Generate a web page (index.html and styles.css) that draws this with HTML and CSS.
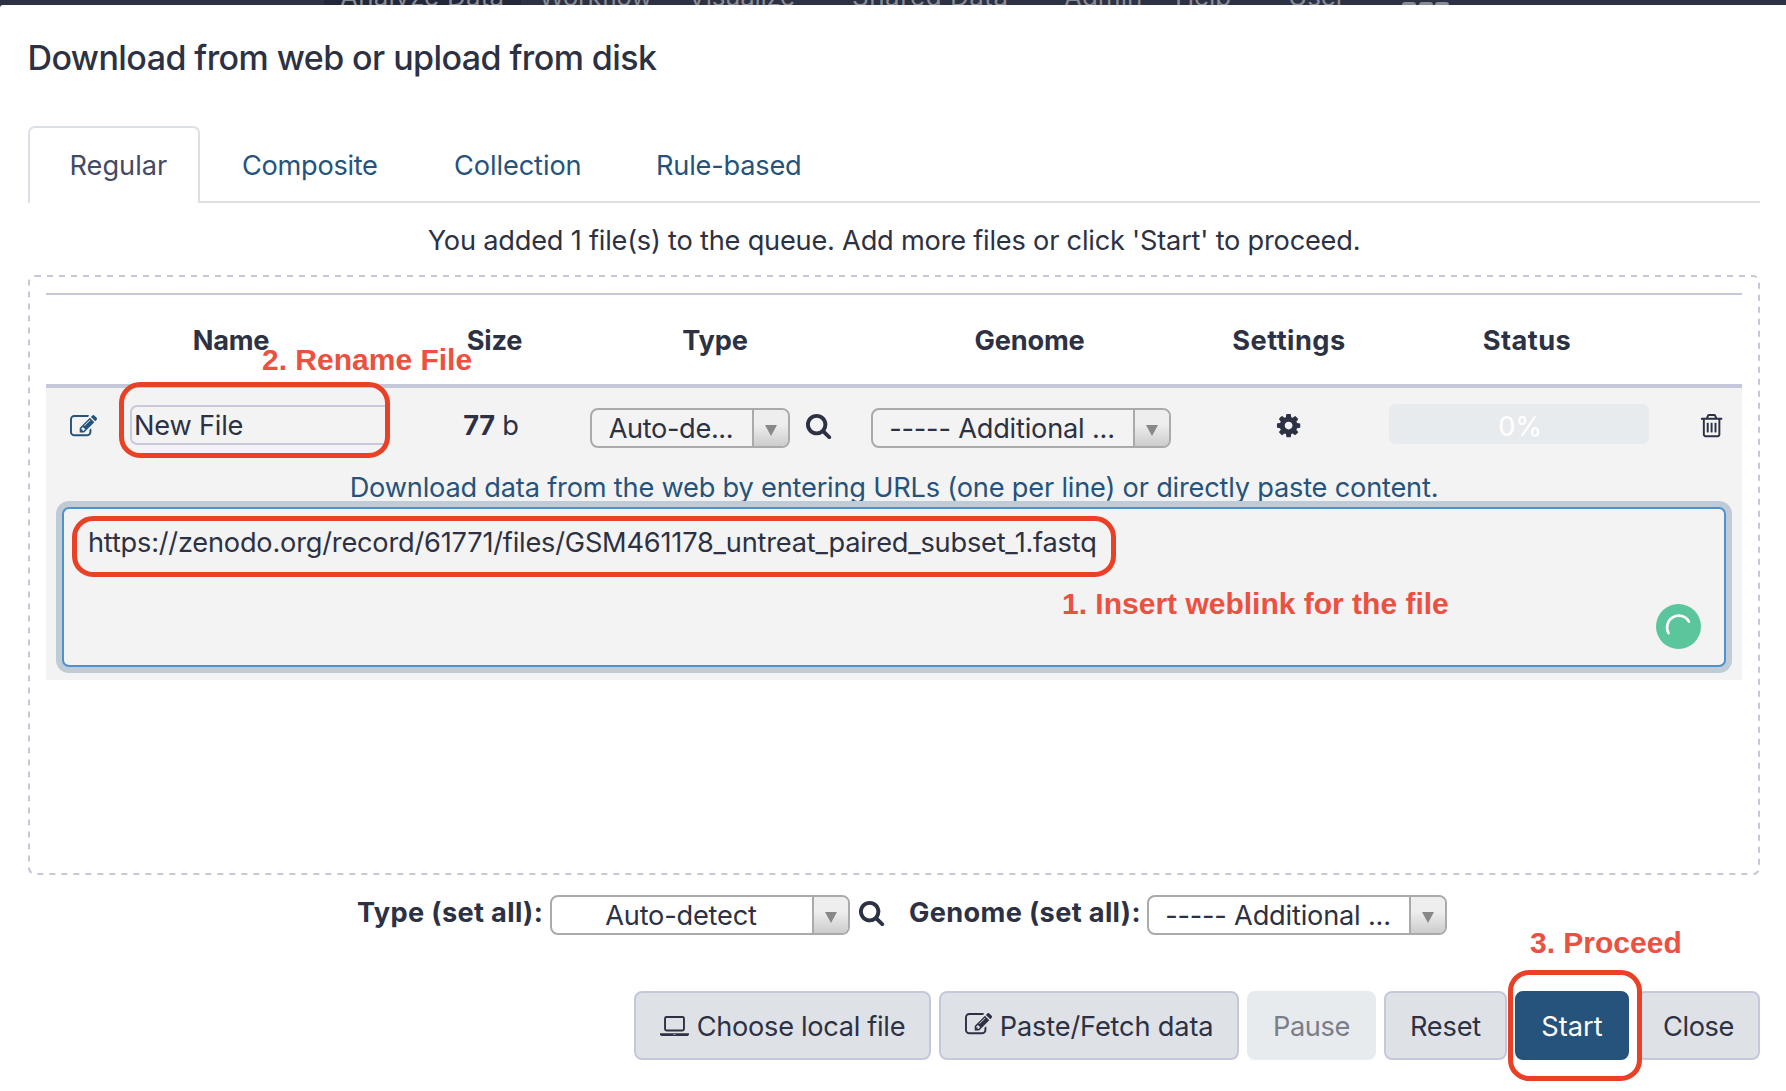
FILE: index.html
```html
<!DOCTYPE html>
<html lang="en">
<head>
<meta charset="utf-8">
<title>Download from web or upload from disk</title>
<link rel="stylesheet" href="styles.css">
</head>
<body>
<svg class="defs" aria-hidden="true">
  <symbol id="edit" viewBox="0 0 1792 1792"><path d="M888 1184l116-116-152-152-116 116v56h96v96h56zm440-720q-16-16-33 1l-350 350q-17 17-1 33t33-1l350-350q17-17 1-33zm80 594v190q0 119-84.5 203.5t-203.5 84.5h-832q-119 0-203.5-84.5t-84.5-203.5v-832q0-119 84.5-203.5t203.5-84.5h832q63 0 117 25 15 7 18 23 3 17-9 29l-49 49q-14 14-32 8-23-6-45-6h-832q-66 0-113 47t-47 113v832q0 66 47 113t113 47h832q66 0 113-47t47-113v-126q0-13 9-22l64-64q15-15 35-7t20 29zm-96-738l288 288-672 672h-288v-288zm444 132l-92 92-288-288 92-92q28-28 68-28t68 28l152 152q28 28 28 68t-28 68z"/></symbol>
  <symbol id="search" viewBox="0 0 1792 1792"><path d="M1216 832q0-185-131.5-316.5t-316.5-131.5-316.5 131.5-131.5 316.5 131.5 316.5 316.5 131.5 316.5-131.5 131.5-316.5zm512 832q0 52-38 90t-90 38q-54 0-90-38l-343-342q-179 124-399 124-143 0-273.5-55.5t-225-150-150-225-55.5-273.5 55.5-273.5 150-225 225-150 273.5-55.5 273.5 55.5 225 150 150 225 55.5 273.5q0 220-124 399l343 343q37 37 37 90z"/></symbol>
  <symbol id="cog" viewBox="0 0 1792 1792"><path d="M1152 896q0-106-75-181t-181-75-181 75-75 181 75 181 181 75 181-75 75-181zm512-109v222q0 12-8 23t-20 13l-185 28q-19 54-39 91 35 50 107 138 10 12 10 25t-9 23q-27 37-99 108t-94 71q-12 0-26-9l-138-108q-44 23-91 38-16 136-29 186-7 28-36 28h-222q-14 0-24.5-8.5t-11.5-21.5l-28-184q-49-16-90-37l-141 107q-10 9-25 9-14 0-25-11-126-114-165-168-7-10-7-23 0-12 8-23 15-21 51-66.5t54-70.5q-27-50-41-99l-183-27q-13-2-21-12.5t-8-23.5v-222q0-12 8-23t19-13l186-28q14-46 39-92-40-57-107-138-10-12-10-24 0-10 9-23 26-36 98.5-107.5t94.5-71.5q13 0 26 10l138 107q44-23 91-38 16-136 29-186 7-28 36-28h222q14 0 24.5 8.5t11.5 21.5l28 184q49 16 90 37l142-107q9-9 24-9 13 0 25 10 129 119 165 170 7 8 7 22 0 12-8 23-15 21-51 66.5t-54 70.5q26 50 41 98l183 28q13 2 21 12.5t8 23.5z"/></symbol>
  <symbol id="trash" viewBox="0 0 1792 1792"><path d="M704 736v576q0 14-9 23t-23 9h-64q-14 0-23-9t-9-23v-576q0-14 9-23t23-9h64q14 0 23 9t9 23zm256 0v576q0 14-9 23t-23 9h-64q-14 0-23-9t-9-23v-576q0-14 9-23t23-9h64q14 0 23 9t9 23zm256 0v576q0 14-9 23t-23 9h-64q-14 0-23-9t-9-23v-576q0-14 9-23t23-9h64q14 0 23 9t9 23zm128 724v-948h-896v948q0 22 7 40.5t14.5 27 10.5 8.5h832q3 0 10.5-8.5t14.5-27 7-40.5zm-672-1076h448l-48-117q-7-9-17-11h-317q-10 2-17 11zm928 32v64q0 14-9 23t-23 9h-96v948q0 83-47 143.5t-113 60.5h-832q-66 0-113-58.5t-47-141.5v-952h-96q-14 0-23-9t-9-23v-64q0-14 9-23t23-9h309l70-167q15-37 54-63t79-26h320q40 0 79 26t54 63l70 167h309q14 0 23 9t9 23z"/></symbol>
  <symbol id="laptop" viewBox="0 0 29 22"><path fill-rule="evenodd" d="M6.500 1h16a2.400 2.400 0 0 1 2.400 2.400v10.600a2.400 2.400 0 0 1-2.400 2.400h-16a2.400 2.400 0 0 1-2.400-2.400v-10.600a2.400 2.400 0 0 1 2.400-2.400zm0 1.900a.5.5 0 0 0-.5.5v10.600a.5.5 0 0 0 .5.5h16a.5.5 0 0 0 .5-.5v-10.600a.5.5 0 0 0-.5-.5zM0 18.200h29v1.300c0 .9-1.100 1.500-2.400 1.500h-24.200c-1.300 0-2.400-.6-2.400-1.500zm13.200.7v.6h2.600v-.6z"/></symbol>
  <symbol id="arrow" viewBox="0 0 12 11"><path d="M0 0h12l-6 11z"/></symbol>
</svg>

<nav class="masthead">
  <span class="nav-item nav-analyze">Analyze Data</span>
  <span class="nav-item nav-workflow">Workflow</span>
  <span class="nav-item nav-visualize">Visualize</span>
  <span class="nav-item nav-shared">Shared Data</span>
  <span class="nav-item nav-admin">Admin</span>
  <span class="nav-item nav-help">Help</span>
  <span class="nav-item nav-user">User</span>
  <span class="nav-grid"><i></i><i></i><i></i></span>
</nav>

<main class="modal">
  <h1 class="title">Download from web or upload from disk</h1>

  <div class="tabs">
    <a class="tab active">Regular</a>
    <a class="tab tab-composite">Composite</a>
    <a class="tab tab-collection">Collection</a>
    <a class="tab tab-rule">Rule-based</a>
  </div>

  <p class="info">You added 1 file(s) to the queue. Add more files or click 'Start' to proceed.</p>

  <section class="queue">
    <svg class="dashes"><rect x="1" y="1" width="1730" height="598" rx="6"/></svg>
    <div class="thead">
      <span></span><span>Name</span><span>Size</span><span>Type</span><span>Genome</span><span class="wide">Settings</span><span class="wide">Status</span><span></span>
    </div>
    <div class="item">
      <div class="row">
        <svg class="icon row-edit"><use href="#edit"/></svg>
        <input class="name" value="New File" spellcheck="false">
        <div class="size"><b>77</b> b</div>
        <div class="type">
          <div class="select short"><span>Auto-de...</span><i><svg><use href="#arrow"/></svg></i></div>
          <svg class="icon"><use href="#search"/></svg>
        </div>
        <div class="select genome"><span>----- Additional ...</span><i><svg><use href="#arrow"/></svg></i></div>
        <svg class="icon row-cog"><use href="#cog"/></svg>
        <div class="progress">0%</div>
        <svg class="icon row-trash"><use href="#trash"/></svg>
      </div>
      <p class="hint">Download data from the web by entering URLs (one per line) or directly paste content.</p>
      <div class="paste">
        <textarea class="url" spellcheck="false">https://zenodo.org/record/61771/files/GSM461178_untreat_paired_subset_1.fastq</textarea>
        <svg class="spinner" viewBox="0 0 45 45"><circle cx="22.500" cy="22.500" r="22.500" fill="#5bc59b"/><path d="M12.600 29.200A11.200 11.200 0 0 1 33 17.600" fill="none" stroke="#fff" stroke-width="2.600" stroke-linecap="round"/></svg>
      </div>
    </div>
  </section>

  <div class="set-all">
    <label class="label-type">Type (set all):</label>
    <div class="select"><span>Auto-detect</span><i><svg><use href="#arrow"/></svg></i></div>
    <svg class="icon"><use href="#search"/></svg>
    <label class="label-genome">Genome (set all):</label>
    <div class="select"><span>----- Additional ...</span><i><svg><use href="#arrow"/></svg></i></div>
  </div>

  <div class="buttons">
    <button class="btn choose"><svg class="laptop"><use href="#laptop"/></svg>Choose local file</button>
    <button class="btn fetch"><svg class="icon"><use href="#edit"/></svg>Paste/Fetch data</button>
    <button class="btn pause">Pause</button>
    <button class="btn reset">Reset</button>
    <button class="btn start">Start</button>
    <button class="btn close">Close</button>
  </div>
</main>

<div class="frame frame-name"></div>
<div class="frame frame-url"></div>
<div class="frame frame-start"></div>
<div class="note note-rename">2. Rename File</div>
<div class="note note-insert">1. Insert weblink for the file</div>
<div class="note note-proceed">3. Proceed</div>
</body>
</html>
```
FILE: styles.css
```css
* { box-sizing: border-box; }

body {
  position: relative;
  width: 1786px;
  height: 1091px;
  margin: 0;
  overflow: hidden;
  background: #2c3143;
  color: #2c3143;
  font: 400 27.2px/40px Inter, "Liberation Sans", sans-serif;
  letter-spacing: -0.2px;
}

.defs { position: absolute; width: 0; height: 0; }
.icon { flex: none; width: 27.2px; height: 27.2px; fill: currentColor; }

/* masthead, mostly hidden behind the dialog */
.masthead {
  display: flex;
  align-items: flex-end;
  height: 5px;
  padding-left: 324px;
  overflow: hidden;
  color: #898b95;
  font-size: 26px;
}
.nav-item { flex: none; height: 34px; line-height: 41px; margin-bottom: -5px; white-space: nowrap; }
.nav-analyze { width: 197px; padding-left: 16px; background: #23273a; letter-spacing: 0.2px; }
.nav-workflow { width: 167px; padding-left: 18px; letter-spacing: -0.5px; }
.nav-visualize { width: 164px; letter-spacing: -0.3px; }
.nav-shared { width: 212px; letter-spacing: 0.5px; }
.nav-admin { width: 111px; letter-spacing: 0; }
.nav-help { width: 113px; }
.nav-user { width: 114px; }
.nav-grid { display: flex; gap: 2.500px; height: 3px; }
.nav-grid i { width: 14px; height: 8px; border-radius: 3px; background: #898b95; }

.modal {
  display: flex;
  flex-direction: column;
  height: 1086px;
  padding: 0 26px 0 28px;
  border-top-left-radius: 3px;
  background: #fff;
}

.title {
  margin: 28px 0 0 -0.500px;
  font-size: 34px;
  font-weight: 500;
  line-height: 50px;
  letter-spacing: -0.57px;
}

.tabs {
  display: flex;
  height: 77px;
  margin-top: 43px;
  border-bottom: 2px solid #dce0e6;
  color: #25537b;
  line-height: 76px;
}
.tab { height: 77px; padding-top: 2px; }
.tab.active {
  width: 172px;
  padding: 0 0 0 39.500px;
  border: 2px solid #dce0e6;
  border-bottom: 0;
  border-radius: 7px 7px 0 0;
  background: #fff;
  color: #434a63;
  letter-spacing: 0;
}
.tab-composite { padding-left: 42px; width: 254px; letter-spacing: -0.3px; }
.tab-collection { width: 202px; letter-spacing: -0.1px; }
.tab-rule { letter-spacing: -0.2px; }

.info { margin: 18px 0 0; height: 40px; text-align: center; letter-spacing: -0.215px; }

.queue {
  position: relative;
  height: 600px;
  margin-top: 14px;
  padding: 18px;
}
.dashes { position: absolute; inset: 0; width: 100%; height: 100%; }
.dashes rect { fill: none; stroke: #c5c8da; stroke-width: 2; stroke-dasharray: 6 6; }
.thead {
  display: grid;
  grid-template-columns: 28px 314px 213px 228px 401px 118px 358px 36px;
  height: 95px;
  border-top: 2px solid #c5c8da;
  border-bottom: 4px solid #c5c8da;
  font-weight: 700;
  line-height: 91px;
  text-align: center;
}
.thead .wide { letter-spacing: 0.45px; }

.item { height: 292px; background: #f3f3f3; }
.row {
  display: grid;
  grid-template-columns: 84px 258px 202px 281px 300px 218px 260px 93px;
  align-items: start;
  height: 93px;
}
.row-edit { margin: 24.500px 0 0 24px; color: #25537b; }
.name {
  height: 40px;
  margin-top: 17px;
  padding: 2px 0 0 2px;
  border: 2px solid #c8cadc;
  border-right: 0;
  border-radius: 7px 0 0 7px;
  outline: 0;
  background: transparent;
  color: inherit;
  font: inherit;
  letter-spacing: inherit;
}
.size { margin-top: 18px; padding-left: 4px; text-align: center; }
.type { display: flex; gap: 15px; padding-top: 20px; }
.type .icon { margin-top: 3.500px; }
.genome { margin-top: 20px; }
.row-cog { margin: 23.600px 0 0 103.500px; }
.progress {
  height: 40px;
  margin-top: 16px;
  padding-left: 2px;
  border-radius: 7px;
  background: #e8ebee;
  color: #fff;
  line-height: 46px;
  text-align: center;
}
.row-trash { margin: 23.600px 0 0 48.500px; }

.select {
  display: flex;
  flex: none;
  width: 300px;
  height: 40px;
  overflow: hidden;
  border: 2px solid #aaa;
  border-radius: 8px;
}
.select.short { width: 200px; letter-spacing: -0.37px; }
.select span { flex: 1; line-height: 38px; padding-right: 2px; text-align: center; white-space: nowrap; }
.select i {
  display: flex;
  width: 36px;
  align-items: center;
  justify-content: center;
  border-left: 2px solid #aaa;
  background: linear-gradient(#eee 40%, #ccc);
}
.select i svg { width: 12px; height: 11px; margin-top: 4px; fill: #888; }

.hint { height: 26px; margin: 0; color: #25537b; line-height: 14px; text-align: center; }
.paste { position: relative; padding: 0 16px; }
.url {
  display: block;
  width: 100%;
  height: 160px;
  padding: 14px 24px;
  resize: none;
  border: 2px solid #4d92cd;
  border-radius: 7px;
  outline: 0;
  background: #f3f3f3;
  box-shadow: 0 0 0 6px #bfcbd6;
  color: inherit;
  font: inherit;
  letter-spacing: -0.21px;
}
.spinner { position: absolute; right: 41px; bottom: 18px; width: 45px; height: 45px; }

.set-all { display: flex; height: 40px; margin: 20px 0 0 329px; }
.set-all label { font-weight: 700; line-height: 35px; letter-spacing: 0.34px; white-space: nowrap; }
.label-type { width: 193px; }
.set-all .icon { margin: 4px 0 0 7.600px; }
.label-genome { width: 238px; margin-left: 24.200px; }

.buttons { display: flex; justify-content: flex-end; gap: 8px; height: 69px; margin-top: 56px; }
.btn {
  display: flex;
  align-items: center;
  justify-content: center;
  padding: 2px 0 0;
  border: 2px solid #c5c8da;
  border-radius: 8px;
  background: #dee1e6;
  color: inherit;
  font: inherit;
  letter-spacing: -0.2px;
  white-space: nowrap;
}
.btn .icon, .btn .laptop { margin-right: 8px; }
.btn .icon { margin-top: -3px; }
.laptop { width: 29px; height: 22px; margin-top: -2px; fill: currentColor; }
.choose { width: 297px; letter-spacing: -0.31px; }
.fetch { width: 300px; letter-spacing: -0.15px; }
.pause { width: 129px; border-color: #e8ebee; background: #e8ebee; color: #7b7e8a; letter-spacing: -0.4px; }
.reset { width: 123px; }
.start { width: 114px; border-color: #25537b; background: #25537b; color: #fff; letter-spacing: 0; }
.close { width: 123px; letter-spacing: -0.4px; }

/* tutorial annotations over the dialog */
.frame { position: absolute; border: 5px solid #ea4025; border-radius: 21px; }
.frame-name { left: 119px; top: 382px; width: 271px; height: 76px; }
.frame-url { left: 72px; top: 516px; width: 1044px; height: 61px; }
.frame-start { left: 1507.500px; top: 970px; width: 134px; height: 111px; }
.note {
  position: absolute;
  color: #eb5040;
  font: 700 30px/34px "Liberation Sans", Arial, sans-serif;
  letter-spacing: 0;
  white-space: nowrap;
}
.note-rename { left: 262px; top: 343px; }
.note-insert { left: 1062px; top: 587px; }
.note-proceed { left: 1530px; top: 926px; }
```
